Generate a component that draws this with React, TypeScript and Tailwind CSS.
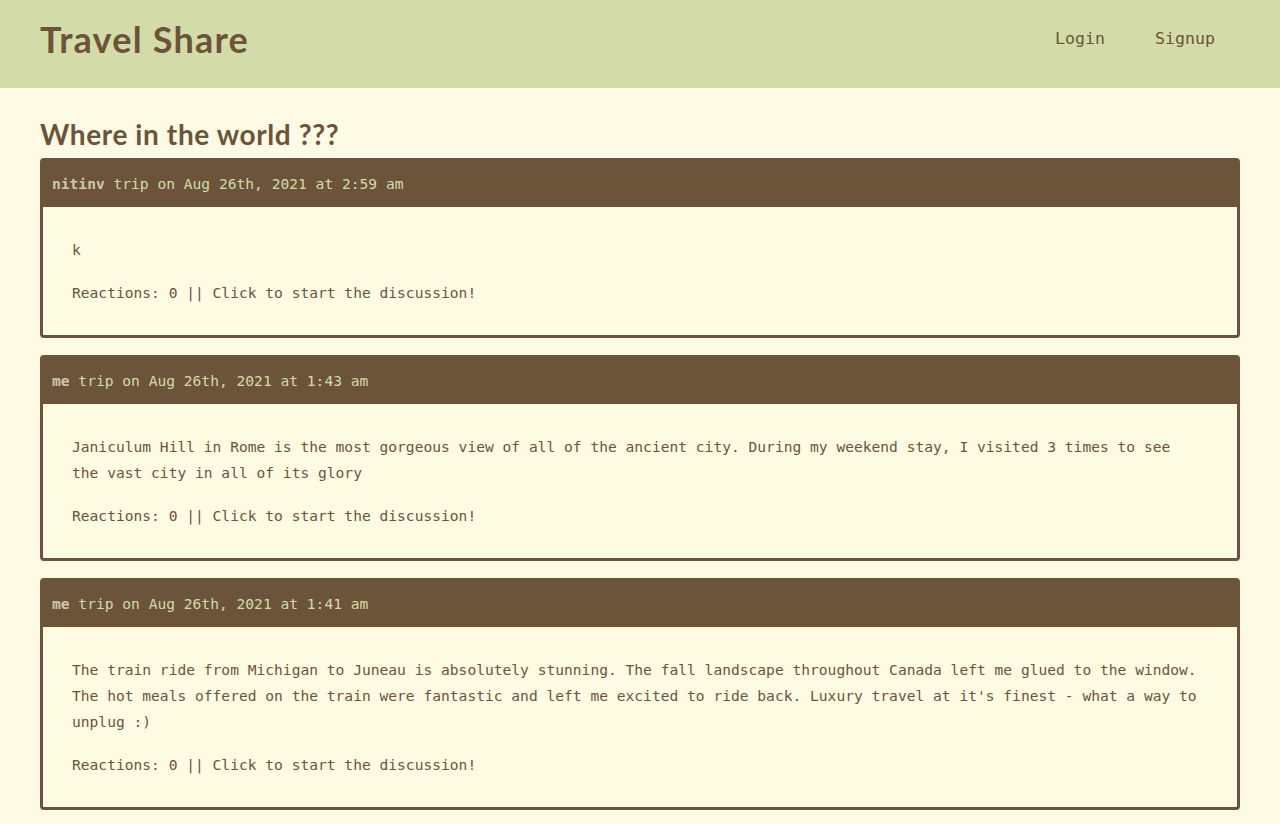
const posts = [
    {
        user: 'nitinv',
        date: 'Aug 26th, 2021 at 2:59 am',
        body: 'k',
    },
    {
        user: 'me',
        date: 'Aug 26th, 2021 at 1:43 am',
        body: 'Janiculum Hill in Rome is the most gorgeous view of all of the ancient city. During my weekend stay, I visited 3 times to see the vast city in all of its glory',
    },
    {
        user: 'me',
        date: 'Aug 26th, 2021 at 1:41 am',
        body: "The train ride from Michigan to Juneau is absolutely stunning. The fall landscape throughout Canada left me glued to the window. The hot meals offered on the train were fantastic and left me excited to ride back. Luxury travel at it's finest - what a way to unplug :)",
    },
];

const mono = { fontFamily: '"DejaVu Sans Mono", "Liberation Mono", monospace' };
const sans = { fontFamily: 'Lato, "Noto Sans", sans-serif' };

function PostCard({ user, date, body }: { user: string; date: string; body: string }) {
    return (
        <div className="mb-[17px] rounded-[4px] border-[3px] border-[#6b5439] bg-[#fefbe3]">
            <div
                className="flex h-[46px] items-center bg-[#6b5439] px-[9px] text-[14.6px] text-[#d3dca8]"
                style={mono}
            >
                <span className="font-bold text-[#cfc8aa]">{user}</span>
                <span>&nbsp;trip on {date}</span>
            </div>
            <div
                className="pb-[29px] pl-[29px] pr-[34px] pt-[30px] text-[14.6px] leading-[26px] text-[#6b5439]"
                style={mono}
            >
                <p>{body}</p>
                <p className="mt-[17px] cursor-pointer">Reactions: 0 || Click to start the discussion!</p>
            </div>
        </div>
    );
}

export default function App() {
    return (
        <div className="min-h-screen bg-[#fefbe4]">
            <header className="flex h-[88px] items-center justify-between bg-[#d3dca8] px-10 pb-[10px]">
                <h1 className="text-[36px] font-bold leading-none tracking-[1.2px] text-[#6b5439]" style={sans}>
                    Travel Share
                </h1>
                <nav className="flex text-[16.6px] text-[#6b5439]" style={mono}>
                    <a className="cursor-pointer px-[25px]">Login</a>
                    <a className="cursor-pointer px-[25px]">Signup</a>
                </nav>
            </header>
            <main className="px-10">
                <h2
                    className="pb-[7px] pt-[30px] text-[28px] font-bold leading-[33px] tracking-[0.6px] text-[#6b5439]"
                    style={sans}
                >
                    Where in the world ???
                </h2>
                {posts.map((p, i) => (
                    <PostCard key={i} {...p} />
                ))}
            </main>
        </div>
    );
}
